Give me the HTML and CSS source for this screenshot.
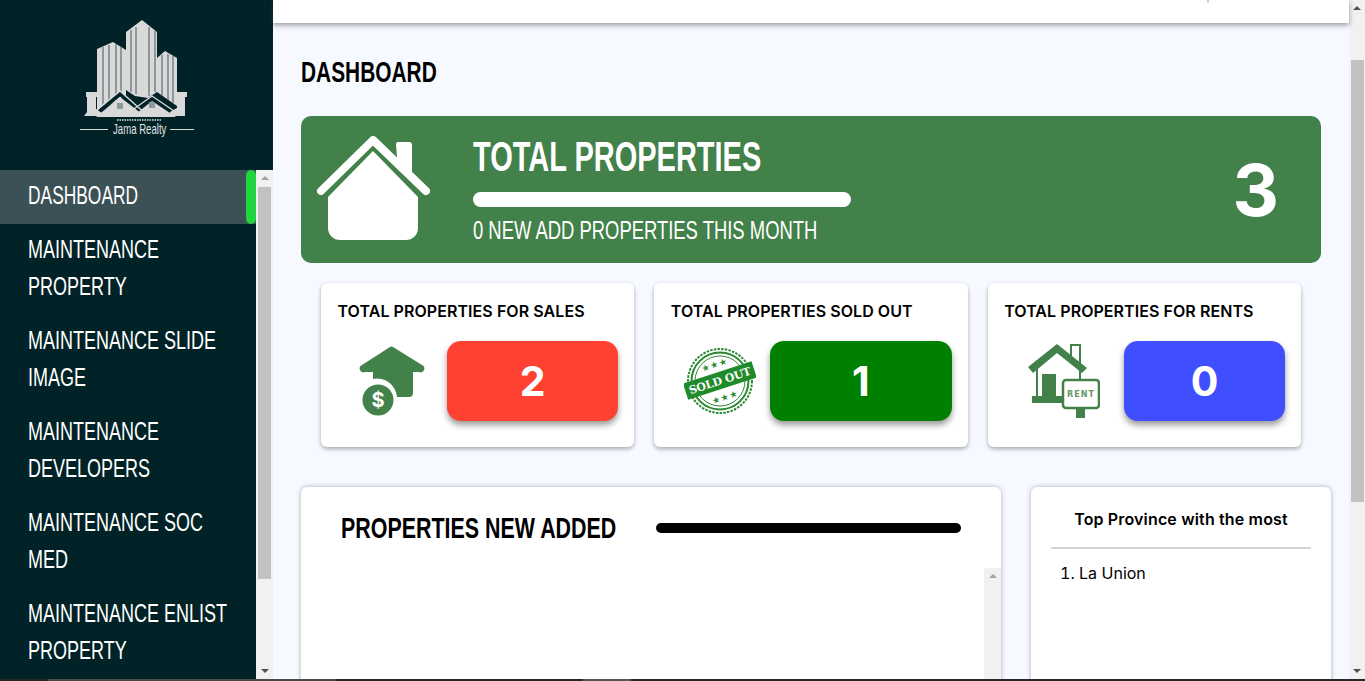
FILE: index.html
```html
<!DOCTYPE html>
<html lang="en">
<head>
<meta charset="utf-8">
<title>Dashboard - Jama Realty</title>
<link rel="stylesheet" href="styles.css">
</head>
<body>
<div class="app">
  <aside class="sidebar">
    <div class="brand">
      <svg class="logo" viewBox="80 15 115 108" width="115" height="108" aria-hidden="true">
        <g fill="#d9d9d9">
          <path d="M97 49 L113 42 L126 50 V96 L97 112 Z"/>
          <path d="M126 32 L142 20 L157 32 V92 L148 98 L135 96 L126 90 Z"/>
          <path d="M157 58 L165 51 L177 58 V106 L157 92 Z"/>
        </g>
        <g stroke="#4f6468" stroke-width="1.1" fill="none">
          <path d="M103 47 V106 M109 45 V102 M116 44 V98 M121 47 V96"/>
          <path d="M131 30 V92 M136 27 V94 M149 27 V96 M155 31 V92"/>
          <path d="M162 55 V96 M168 54 V100 M173 56 V103"/>
        </g>
        <path d="M94 116 L120 94 L147 116" fill="none" stroke="#012328" stroke-width="4"/>
        <path d="M134 112 L152 98 L174 112" fill="none" stroke="#012328" stroke-width="4"/>
        <path d="M96 117 L120 97 L146 117 Z" fill="#d9d9d9"/>
        <path d="M132 117 L152 101 L176 117 Z" fill="#d9d9d9"/>
        <path d="M93 113 L120 91 L148 116" fill="none" stroke="#d9d9d9" stroke-width="1.4"/>
        <path d="M131 111 L152 96 L174 111" fill="none" stroke="#d9d9d9" stroke-width="1.4"/>
        <rect x="117" y="103" width="6" height="6" fill="#8d9a9c"/>
        <rect x="149" y="102" width="6" height="6" fill="#8d9a9c"/>
        <g fill="#d9d9d9">
          <path d="M86 92 H98 V97 H96 V109 L102 113 V116 H84 L87 112 V97 H86 Z"/>
          <path d="M177 92 H187 V97 H185 V116 H170 V112 L177 108 Z"/>
        </g>
        <line x1="117" y1="120" x2="162" y2="120" stroke="#a9b3b5" stroke-width="2" stroke-dasharray="1.500 1"/>
      </svg>
      <div class="brand-tag"><span class="brand-line"></span><span class="brand-name">Jama Realty</span><span class="brand-line short"></span></div>
    </div>
    <div class="nav-wrap">
      <nav class="nav">
        <a class="nav-item active"><span class="nav-line">DASHBOARD</span></a>
        <a class="nav-item"><span class="nav-line">MAINTENANCE</span><span class="nav-line">PROPERTY</span></a>
        <a class="nav-item"><span class="nav-line">MAINTENANCE SLIDE</span><span class="nav-line">IMAGE</span></a>
        <a class="nav-item"><span class="nav-line">MAINTENANCE</span><span class="nav-line">DEVELOPERS</span></a>
        <a class="nav-item"><span class="nav-line">MAINTENANCE SOC</span><span class="nav-line">MED</span></a>
        <a class="nav-item"><span class="nav-line">MAINTENANCE ENLIST</span><span class="nav-line">PROPERTY</span></a>
      </nav>
      <div class="scrollbar nav-scroll">
        <span class="arrow up"></span>
        <span class="thumb"></span>
        <span class="arrow down"></span>
      </div>
    </div>
  </aside>
  <div class="content">
    <header class="topbar"><span class="tick"></span></header>
    <main class="page">
      <h1 class="page-title">DASHBOARD</h1>
      <section class="banner">
        <svg class="banner-icon" viewBox="0 0 116 106" width="116" height="106" aria-hidden="true">
          <path fill="#fff" d="M80 8 a2 2 0 0 1 2-2 H93 a3 3 0 0 1 3 3 V42 L82 34 Z"/>
          <path fill="none" stroke="#fff" stroke-width="8" stroke-linecap="round" stroke-linejoin="round" d="M5 55 L57 4 L110 55"/>
          <path fill="#fff" d="M57 15 L102 61 V92 a12 12 0 0 1-12 12 H24 a12 12 0 0 1-12-12 V61 Z"/>
        </svg>
        <div class="banner-body">
          <h2 class="banner-title">TOTAL PROPERTIES</h2>
          <div class="banner-bar"></div>
          <p class="banner-sub">0 NEW ADD PROPERTIES THIS MONTH</p>
        </div>
        <div class="banner-count">3</div>
      </section>
      <section class="stats">
        <article class="card">
          <h3 class="card-title">TOTAL PROPERTIES FOR SALES</h3>
          <div class="card-row">
            <svg class="card-icon sale" viewBox="0 0 66 70" width="66" height="70" aria-hidden="true">
              <path fill="#43814a" d="M31 1 a3 3 0 0 1 3 0 L63 19 a3.500 3.500 0 0 1-3 7 H54 V47 a4 4 0 0 1-4 4 H38 A20 20 0 0 0 14 33 V26 H6 a3.500 3.500 0 0 1-3-7 Z"/>
              <circle cx="19" cy="54" r="15.500" fill="#43814a"/>
              <text x="19" y="61" class="dollar">$</text>
            </svg>
            <div class="count red">2</div>
          </div>
        </article>
        <article class="card">
          <h3 class="card-title">TOTAL PROPERTIES SOLD OUT</h3>
          <div class="card-row">
            <svg class="card-icon sold" viewBox="0 0 72 68" width="72" height="68" aria-hidden="true">
              <circle cx="36" cy="34" r="32" fill="none" stroke="#2a8a30" stroke-width="2" stroke-dasharray="2.500 1.200"/>
              <circle cx="36" cy="34" r="28.500" fill="none" stroke="#2a8a30" stroke-width="2"/>
              <circle cx="36" cy="34" r="25" fill="none" stroke="#2a8a30" stroke-width="1"/>
              <g transform="rotate(-18 36 34)">
                <text x="36" y="20" class="stars">★★★</text>
                <text x="36" y="54" class="stars">★★★</text>
                <rect x="0" y="25" width="72" height="17" fill="#1f8a29"/>
                <text x="36" y="37.500" class="sold-text">SOLD OUT</text>
              </g>
            </svg>
            <div class="count green">1</div>
          </div>
        </article>
        <article class="card">
          <h3 class="card-title">TOTAL PROPERTIES FOR RENTS</h3>
          <div class="card-row">
            <svg class="card-icon rent" viewBox="0 0 72 74" width="72" height="74" aria-hidden="true">
              <path fill="none" stroke="#43814a" stroke-width="2" d="M43 12 V1 H52 V22 M52 24 V36 M9 24 V54"/>
              <path fill="#43814a" d="M29 0 L59 24 L54 29 L29 9 L5 29 L0 23 Z"/>
              <rect x="14" y="30" width="14" height="28" fill="#43814a"/>
              <rect x="4" y="52" width="32" height="7" fill="#43814a"/>
              <rect x="35" y="36" width="36" height="28" rx="3" fill="#fff" stroke="#43814a" stroke-width="2.500"/>
              <rect x="48" y="65" width="9" height="9" fill="#43814a"/>
              <text x="53" y="53" class="rent-text">RENT</text>
            </svg>
            <div class="count blue">0</div>
          </div>
        </article>
      </section>
      <section class="lower">
        <article class="panel new-panel">
          <div class="panel-head">
            <h2 class="panel-title">PROPERTIES NEW ADDED</h2>
            <div class="panel-bar"></div>
          </div>
          <div class="panel-scroll">
            <div class="scrollbar inner-scroll"><span class="arrow up light"></span></div>
          </div>
        </article>
        <aside class="panel top-panel">
          <h3 class="top-title">Top Province with the most</h3>
          <hr class="top-rule">
          <ol class="top-list"><li>La Union</li></ol>
        </aside>
      </section>
    </main>
    <div class="scrollbar page-scroll">
      <span class="arrow up"></span>
      <span class="thumb"></span>
      <span class="arrow down"></span>
    </div>
  </div>
</div>
<div class="edge"><span class="edge-a"></span><span class="edge-b"></span><span class="edge-c"></span></div>
</body>
</html>
```
FILE: styles.css
```css
* { box-sizing: border-box; }
html, body { margin: 0; height: 100%; overflow: hidden; }
body { font-family: Inter, "Liberation Sans", sans-serif; background: #f6f9ff; color: #000; }
.app { display: flex; height: 679px; }
.edge { display: flex; height: 2px; background: #282828; }
.edge-a { width: 288px; margin-left: 48px; background: #4a4a4a; }
.edge-b { width: 48px; margin-left: 247px; background: #555; }
.edge-c { flex: 1; }
.sidebar { width: 273px; flex: none; display: flex; flex-direction: column; background: #012328; min-height: 0; }
.brand { height: 170px; flex: none; display: flex; flex-direction: column; align-items: center; padding-top: 15px; }
.logo { display: block; margin-left: 2px; flex: none; }
.brand-tag { display: flex; align-items: center; margin-top: -1px; width: 114px; height: 14px; color: #e2e2e2; }
.brand-line { flex: none; width: 28px; height: 1px; background: #d9d9d9; }
.brand-line.short { width: 24px; }
.brand-name { flex: none; width: 62px; padding-left: 5px; font: 400 15px/14px "Liberation Sans", sans-serif; white-space: nowrap; transform: scaleX(.64); transform-origin: 5px 50%; }
.nav-wrap { flex: 1; display: flex; min-height: 0; }
.nav { flex: 1; min-width: 0; overflow: hidden; }
.nav-item { display: block; padding: 6.500px 17px 10.500px 28px; font: 400 25px/37px "Liberation Sans", sans-serif; color: #fff; }
.nav-line { display: block; width: 282px; white-space: nowrap; transform: scaleX(.72); transform-origin: 0 50%; }
.active { background: #3b5155; position: relative; }
.active .nav-line { transform: scaleX(.695); }
.active::after { content: ""; position: absolute; right: 0; top: 0; width: 10px; height: 100%; border-radius: 5px; background: #22d43f; }
.scrollbar { flex: none; width: 17px; background: #f1f1f1; display: flex; flex-direction: column; align-items: center; }
.thumb { flex: none; width: 13px; background: #c1c1c1; }
.arrow { flex: none; width: 0; height: 0; border-left: 4px solid transparent; border-right: 4px solid transparent; }
.arrow.up { border-bottom: 4px solid #a3a3a3; margin-top: 6px; }
.arrow.down { border-top: 4px solid #505050; margin-top: auto; margin-bottom: 6px; }
.nav-scroll .thumb { height: 392px; margin-top: 7px; }
.page-scroll { width: 16px; }
.page-scroll .arrow.up { border-bottom-color: #505050; }
.page-scroll .thumb { height: 442px; margin-top: 50px; }
.content { flex: 1; min-width: 0; display: grid; grid-template-columns: 1fr 16px; grid-template-rows: 23px 1fr; }
.topbar { grid-column: 1; grid-row: 1; background: #fff; box-shadow: 0 2px 5px rgba(50, 50, 70, .5); position: relative; z-index: 1; }
.tick { position: absolute; left: 934px; top: 0; width: 2px; height: 3px; background: #d0d0d0; }
.page-scroll { grid-column: 2; grid-row: 1 / 3; }
.page { grid-column: 1; grid-row: 2; overflow: hidden; padding: 0 28px; min-height: 0; }
.page-title { margin: 33px 0 0; width: 188px; font: 700 29px/32px "Liberation Sans", sans-serif; transform: scaleX(.72); transform-origin: 0 50%; white-space: nowrap; }
.banner { margin-top: 28px; width: 1020px; height: 147px; background: #43814a; border-radius: 10px; display: flex; align-items: center; color: #fff; padding: 0 42px 0 15px; }
.banner-icon { flex: none; margin-top: -2px; }
.banner-body { flex: 1; margin-left: 41px; min-width: 0; }
.banner-title { margin: 0; width: 418px; font: 700 42px/44px "Liberation Sans", sans-serif; transform: scaleX(.69); transform-origin: 0 50%; white-space: nowrap; }
.banner-bar { width: 378px; height: 15px; border-radius: 8px; background: #fff; margin-top: 13px; }
.banner-sub { margin: 8px 0 0; width: 467px; font: 400 25px/30px "Liberation Sans", sans-serif; transform: scaleX(.737); transform-origin: 0 50%; white-space: nowrap; }
.banner-count { font: 700 72px/80px Inter, sans-serif; }
.stats { display: grid; grid-template-columns: repeat(3, 1fr); gap: 20px; width: 980px; margin: 20px 0 0 20px; }
.card { height: 164px; background: #fff; border-radius: 6px; box-shadow: 0 2px 4px rgba(0, 0, 0, .32); padding: 18px 16px 0 16.500px; }
.card-title { margin: 0; font: 600 16px/20px Inter, sans-serif; letter-spacing: .06px; white-space: nowrap; }
.card-row { display: flex; align-items: center; margin-top: 20px; }
.card-icon { flex: none; }
.sale { margin-left: 21.500px; margin-right: 22px; }
.sold { margin-left: 13px; margin-right: 14px; }
.rent { margin-left: 24px; margin-right: 24px; }
.count { flex: 1; height: 80px; border-radius: 14px; box-shadow: 0 4px 6px rgba(0, 0, 0, .4); color: #fff; font: 700 41px/80px Inter, sans-serif; text-align: center; }
.red { background: #ff4131; }
.green { background: #008000; }
.blue { background: #3f4fff; }
.dollar { font: 700 20px Inter, sans-serif; fill: #fff; text-anchor: middle; }
.stars { font: 9px "DejaVu Sans", sans-serif; fill: #2a8a30; text-anchor: middle; letter-spacing: 1px; }
.sold-text { font: 700 11px "DejaVu Serif", serif; fill: #fff; text-anchor: middle; letter-spacing: -.2px; }
.rent-text { font: 700 8px "DejaVu Sans", sans-serif; fill: #5f9766; text-anchor: middle; letter-spacing: 1px; }
.lower { display: flex; gap: 30px; margin-top: 40px; }
.panel { background: #fff; border-radius: 6px; box-shadow: 0 0 5px rgba(0, 0, 0, .3); height: 300px; flex: none; }
.new-panel { width: 700px; display: flex; flex-direction: column; }
.panel-head { display: flex; align-items: center; height: 81px; padding: 0 40px; flex: none; }
.panel-title { flex: 1; min-width: 0; margin: 0; font: 700 30px/32px "Liberation Sans", sans-serif; white-space: nowrap; transform: scaleX(.714); transform-origin: 0 50%; }
.panel-bar { flex: none; width: 305px; height: 10px; border-radius: 5px; background: #000; }
.panel-scroll { flex: 1; display: flex; justify-content: flex-end; }
.inner-scroll { height: 100%; }
.top-panel { width: 300px; padding: 0 20px; }
.top-title { margin: 0; padding-top: 22px; font: 600 16px/20px Inter, sans-serif; letter-spacing: .15px; text-align: center; white-space: nowrap; }
.top-rule { margin: 18px 0 0; border: 0; height: 2px; background: #d3d3d3; }
.top-list { margin: 13px 0 0; padding-left: 28px; font: 400 16px/22px Inter, sans-serif; }
```
